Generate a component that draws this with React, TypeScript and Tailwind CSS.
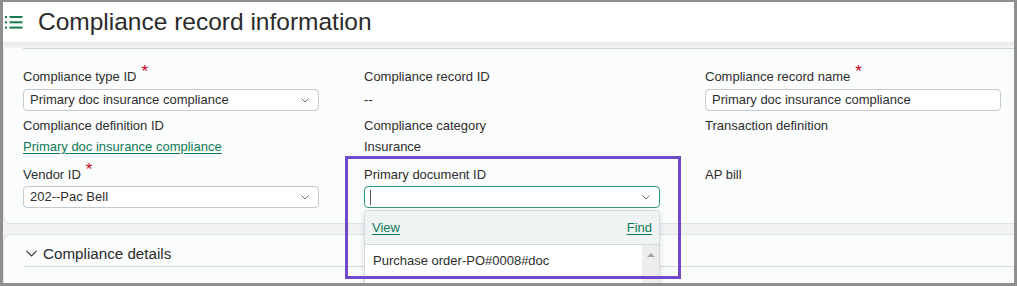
import React from 'react';

const Chevron: React.FC<{ className?: string }> = ({ className }) => (
  <svg className={className} width="8" height="5" viewBox="0 0 8 5" fill="none" stroke="#6b6b6b" strokeWidth="1">
    <path d="M0.5 0.5 L4 4 L7.5 0.5" />
  </svg>
);

const Required = () => (
  <span className="relative -top-[4px] ml-[5px] text-[17px] leading-[0] text-[#c4001a]">*</span>
);

const Label: React.FC<{ text: string; required?: boolean }> = ({ text, required }) => (
  <div className="h-4 leading-4 text-[13px] text-[#2e2e2e] whitespace-nowrap">
    {text}
    {required && <Required />}
  </div>
);

const Select: React.FC<{ value: string }> = ({ value }) => (
  <div className="w-[296px] h-[22px] flex items-center justify-between pl-[6px] pr-[9px] bg-white border border-[#c3cbd0] rounded-[4px] text-[13px] text-[#2e2e2e]">
    <span>{value}</span>
    <Chevron />
  </div>
);

const App: React.FC = () => {
  return (
    <div className="w-[1017px] h-[286px] overflow-hidden bg-[#8f8f8f] pt-[2px] pl-[3px] pr-[3px] pb-[3px] font-['Liberation_Sans',Arial,sans-serif]">
      <div className="relative h-full flex flex-col bg-[#f0f2f3] overflow-hidden">
        {/* page header */}
        <div className="h-[40px] shrink-0 flex items-center bg-white">
          <svg className="ml-[2px]" width="18" height="13" viewBox="0 0 18 13" fill="#187c4d">
            <rect x="0" y="0" width="2" height="2" />
            <rect x="4.5" y="0" width="13" height="2" />
            <rect x="0" y="5.3" width="2" height="2" />
            <rect x="4.5" y="5.3" width="13" height="2" />
            <rect x="0" y="10.6" width="2" height="2" />
            <rect x="4.5" y="10.6" width="13" height="2" />
          </svg>
          <h1 className="ml-[15px] text-[24.5px] leading-none text-[#2b2b2b]">Compliance record information</h1>
        </div>
        <div className="h-[6px] shrink-0 bg-gradient-to-b from-[#e6e8e9] to-[#f3f4f5]" />

        {/* record card */}
        <div className="h-[176px] shrink-0 bg-[#fbfcfc] border-l border-b border-[#dde3e6] rounded-bl-lg">
          <div className="ml-[19px] border-t border-[#c9d5de]" />
          <div className="pl-[19px] pt-[20px] grid grid-cols-[341px_341px_1fr]">
            {/* row 1 */}
            <div>
              <Label text="Compliance type ID" required />
              <div className="mt-[4px]"><Select value="Primary doc insurance compliance" /></div>
            </div>
            <div>
              <Label text="Compliance record ID" />
              <div className="mt-[4px] h-[22px] flex items-center text-[13px] text-[#2e2e2e]">--</div>
            </div>
            <div>
              <Label text="Compliance record name" required />
              <div className="mt-[4px] w-[296px] h-[22px] flex items-center pl-[6px] bg-white border border-[#c3cbd0] rounded-[4px] text-[13px] text-[#2e2e2e]">
                Primary doc insurance compliance
              </div>
            </div>

            {/* row 2 */}
            <div className="mt-[7px]">
              <Label text="Compliance definition ID" />
              <div className="mt-[5px] h-4 leading-4 text-[13px] text-[#0e7b55] underline underline-offset-2">
                Primary doc insurance compliance
              </div>
            </div>
            <div className="mt-[7px]">
              <Label text="Compliance category" />
              <div className="mt-[5px] h-4 leading-4 text-[13px] text-[#2e2e2e]">Insurance</div>
            </div>
            <div className="mt-[7px]">
              <Label text="Transaction definition" />
            </div>

            {/* row 3 */}
            <div className="mt-[12px]">
              <Label text="Vendor ID" required />
              <div className="mt-[3px]"><Select value="202--Pac Bell" /></div>
            </div>
            <div className="mt-[12px]">
              <Label text="Primary document ID" />
              <div className="mt-[3px] w-[296px] h-[22px] flex items-center justify-between pl-[5px] pr-[9px] bg-white border border-[#2f9a6b] rounded-[4px]">
                <span className="w-px h-[15px] bg-[#555]" />
                <Chevron />
              </div>
            </div>
            <div className="mt-[12px]">
              <Label text="AP bill" />
            </div>
          </div>
        </div>

        <div className="h-[10px] shrink-0" />

        {/* details card */}
        <div className="flex-1 bg-[#fbfcfc] border-l border-t border-[#dde3e6] rounded-tl-lg">
          <div className="ml-[19px] h-[32px] flex items-center pt-[6px] border-b border-[#d3dbe0]">
            <svg className="ml-[3px]" width="11" height="7" viewBox="0 0 11 7" fill="none" stroke="#333" strokeWidth="1.1">
              <path d="M0.5 0.8 L5.5 6 L10.5 0.8" />
            </svg>
            <span className="ml-[6px] text-[15.2px] leading-none text-[#2b2b2b]">Compliance details</span>
          </div>
        </div>

        {/* open dropdown */}
        <div className="absolute left-[361px] top-[208px] w-[296px] h-[90px] bg-white border border-[#d4dbdf] rounded-t-[4px] shadow-[0_2px_6px_rgba(0,0,0,0.12)] text-[13px]">
          <div className="h-[34px] flex items-center justify-between px-[7px] bg-[#eff3f4] border-b border-[#d4dbdf] rounded-t-[4px]">
            <span className="text-[#0e7b55] underline underline-offset-2">View</span>
            <span className="text-[#0e7b55] underline underline-offset-2">Find</span>
          </div>
          <div className="flex">
            <div className="flex-1 h-[31px] flex items-center pl-[8px] text-[#2e2e2e]">Purchase order-PO#0008#doc</div>
            <div className="w-[17px] h-[60px] bg-[#ededed] flex justify-center pt-[8px]">
              <svg width="8" height="4" viewBox="0 0 8 4" fill="#a3a3a3">
                <path d="M0 4 L4 0 L8 4 Z" />
              </svg>
            </div>
          </div>
        </div>

        {/* highlight */}
        <div className="absolute left-[342px] top-[154px] w-[336px] h-[123px] border-[3px] border-[#7048c8]" />
      </div>
    </div>
  );
};

export default App;
